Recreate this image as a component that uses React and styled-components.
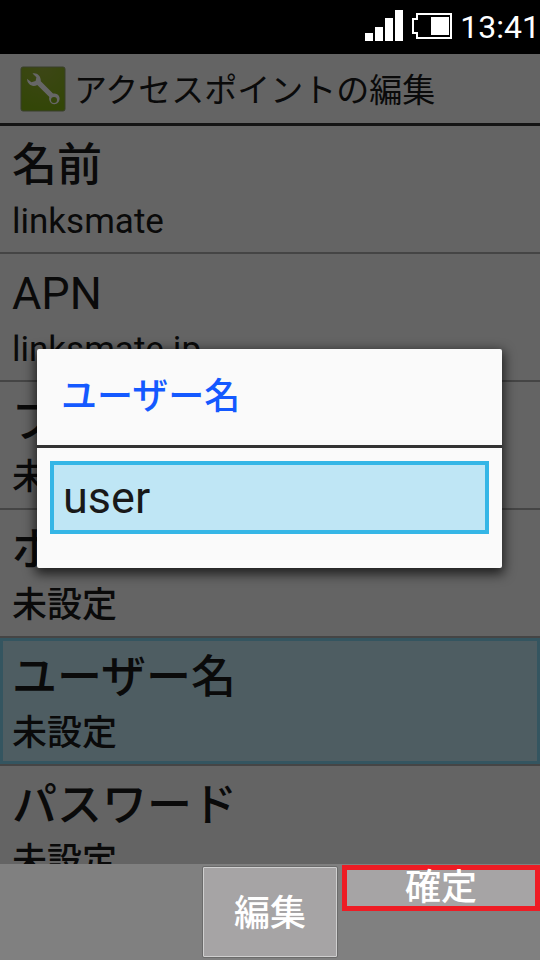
import React, { useState } from "react";
import styled, { createGlobalStyle, css } from "styled-components";

const GlobalStyle = createGlobalStyle`
  *, *::before, *::after { box-sizing: border-box; }
  body {
    margin: 0;
    background: #000;
    font-family: Roboto, "Noto Sans CJK JP", sans-serif;
  }
  button, input { font: inherit; color: inherit; margin: 0; border-radius: 0; }
  :lang(ja) { font-weight: 500; }
`;

const Phone = styled.div`
  display: flex;
  flex-direction: column;
  height: 100vh;
  overflow: hidden;
`;

const StatusBar = styled.header`
  display: flex;
  align-items: center;
  justify-content: flex-end;
  flex: none;
  height: 54px;
  background: #000;
  color: #fff;
`;

const StatusIcons = styled.div`
  display: flex;
  align-items: center;
  gap: 9px;
  padding: 0 8px 3px 0;
`;

const Clock = styled.time`
  font-size: 32px;
  line-height: 54px;
`;

const Screen = styled.main`
  position: relative;
  display: flex;
  flex-direction: column;
  flex: 1;
  min-height: 0;
  background: #fafafa;
  color: #191919;
`;

const TitleBar = styled.div`
  display: flex;
  align-items: center;
  gap: 8px;
  flex: none;
  height: 72px;
  padding-left: 20px;
  border-bottom: 3px solid #323232;
`;

const PageTitle = styled.h1`
  margin: 0;
  padding-top: 4px;
  font-size: 33px;
  line-height: 48px;
  font-weight: 400;
`;

const SettingList = styled.ul`
  flex: 1;
  min-height: 0;
  margin: 0;
  padding: 0;
  list-style: none;
  overflow: hidden;
`;

const SettingItem = styled.li`
  height: 128px;
  border-bottom: 2px solid #adadad;
`;

const SettingButton = styled.button`
  display: flex;
  flex-direction: column;
  width: 100%;
  height: 100%;
  padding: 9px 9px 0;
  border: 3px solid transparent;
  background: none;
  text-align: left;
  ${(p) =>
    p.$selected &&
    css`
      border-color: #82d5f0;
      background: #c3e8f6;
    `}
`;

const SettingName = styled.span`
  font-size: 45px;
  line-height: 56px;
`;

const SettingValue = styled.span`
  font-size: 35px;
  line-height: 56px;
`;

const Scrim = styled.div`
  position: absolute;
  inset: 0;
  display: flex;
  align-items: center;
  padding: 0 38px 2px 37px;
  background: rgba(0, 0, 0, 0.6);
`;

const Dialog = styled.section`
  width: 100%;
  padding-bottom: 34px;
  border-radius: 2px;
  background: #fafafa;
  box-shadow: 0 4px 12px 2px rgba(0, 0, 0, 0.7);
`;

const DialogTitle = styled.label`
  display: block;
  padding: 0 24px;
  border-bottom: 3px solid #323232;
  color: #1459ff;
  font-size: 36px;
  line-height: 96px;
`;

const DialogBody = styled.div`
  padding: 13px 13px 0;
`;

const TextField = styled.input`
  display: block;
  width: 100%;
  height: 73px;
  padding: 0 9px;
  border: 4px solid #35b6e6;
  background: #bfe6f5;
  font-size: 45px;
  outline: none;
`;

const SoftKeys = styled.footer`
  display: grid;
  grid-template-columns: 1fr 136px 1fr;
  align-items: start;
  flex: none;
  height: 96px;
  background: #808080;
  color: #fff;
`;

const SoftKey = styled.button`
  padding: 0;
  background: #a6a4a5;
  font-size: 36px;
`;

const EditKey = styled(SoftKey)`
  grid-column: 2;
  height: 92px;
  margin-top: 2px;
  padding-bottom: 4px;
  border: 1px solid #6b6b6b;
  border-radius: 2px;
  box-shadow: inset 0 0 0 1px #cfcfcf;
`;

const ConfirmKey = styled(SoftKey)`
  grid-column: 3;
  height: 46px;
  margin: 1px 0 0 4px;
  border: 5px solid #ee1c24;
  line-height: 36px;
`;

const settings = [
  ["名前", "linksmate"],
  ["APN", "linksmate.jp"],
  ["プロキシ", "未設定"],
  ["ポート", "未設定"],
  ["ユーザー名", "未設定"],
  ["パスワード", "未設定"],
];

const langOf = (text) => (/^[\x20-\x7e]+$/.test(text) ? "en" : "ja");

function WrenchIcon() {
  return (
    <svg width="46" height="46" viewBox="0 0 46 46" aria-hidden="true">
      <defs>
        <radialGradient id="tile" cx="50%" cy="0%" r="100%">
          <stop offset="0" stopColor="#98b038" />
          <stop offset="1" stopColor="#7fae12" />
        </radialGradient>
      </defs>
      <rect x="1" y="1" width="44" height="44" rx="2" fill="url(#tile)" stroke="#8c9c68" />
      <path
        fill="#fff"
        fillRule="evenodd"
        d="M12.5 7.5C17 6.5 21 10 20.8 15.2L33 27.6C38 26.6 41 31 39 35.2C36.8 39.6 30.5 39 29.4 34.2C29 32.8 29.1 31.8 29.4 31L17.3 19C12.2 21.6 7.2 18.3 7 12.8L11.4 16.2L15.6 15L16.4 11.2ZM34 31A3 3 0 1 0 34 37A3 3 0 1 0 34 31Z"
      />
    </svg>
  );
}

export default function App() {
  const [user, setUser] = useState("user");
  return (
    <>
      <GlobalStyle />
      <Phone>
        <StatusBar>
          <StatusIcons>
            <svg width="38" height="31" viewBox="0 0 38 31" fill="#fff" role="img" aria-label="signal">
              <rect x="0" y="23" width="8" height="8" />
              <rect x="10" y="17" width="8" height="14" />
              <rect x="20" y="8" width="8" height="23" />
              <rect x="30" y="0" width="8" height="31" />
            </svg>
            <svg width="40" height="26" viewBox="0 0 40 26" role="img" aria-label="battery">
              <path d="M5 1H39V25H5V20H1V6H5Z" fill="none" stroke="#fff" strokeWidth="2" />
              <rect x="19" y="4" width="18" height="18" fill="#fff" />
            </svg>
          </StatusIcons>
          <Clock>13:41</Clock>
        </StatusBar>
        <Screen>
          <TitleBar>
            <WrenchIcon />
            <PageTitle lang="ja">アクセスポイントの編集</PageTitle>
          </TitleBar>
          <SettingList>
            {settings.map(([name, value]) => (
              <SettingItem key={name}>
                <SettingButton type="button" $selected={name === "ユーザー名"}>
                  <SettingName lang={langOf(name)}>{name}</SettingName>
                  <SettingValue lang={langOf(value)}>{value}</SettingValue>
                </SettingButton>
              </SettingItem>
            ))}
          </SettingList>
          <Scrim>
            <Dialog role="dialog" aria-labelledby="dialog-title">
              <DialogTitle id="dialog-title" htmlFor="user-name" lang="ja">ユーザー名</DialogTitle>
              <DialogBody>
                <TextField id="user-name" type="text" value={user} onChange={(e) => setUser(e.target.value)} />
              </DialogBody>
            </Dialog>
          </Scrim>
        </Screen>
        <SoftKeys>
          <EditKey type="button" lang="ja">編集</EditKey>
          <ConfirmKey type="button" lang="ja">確定</ConfirmKey>
        </SoftKeys>
      </Phone>
    </>
  );
}
